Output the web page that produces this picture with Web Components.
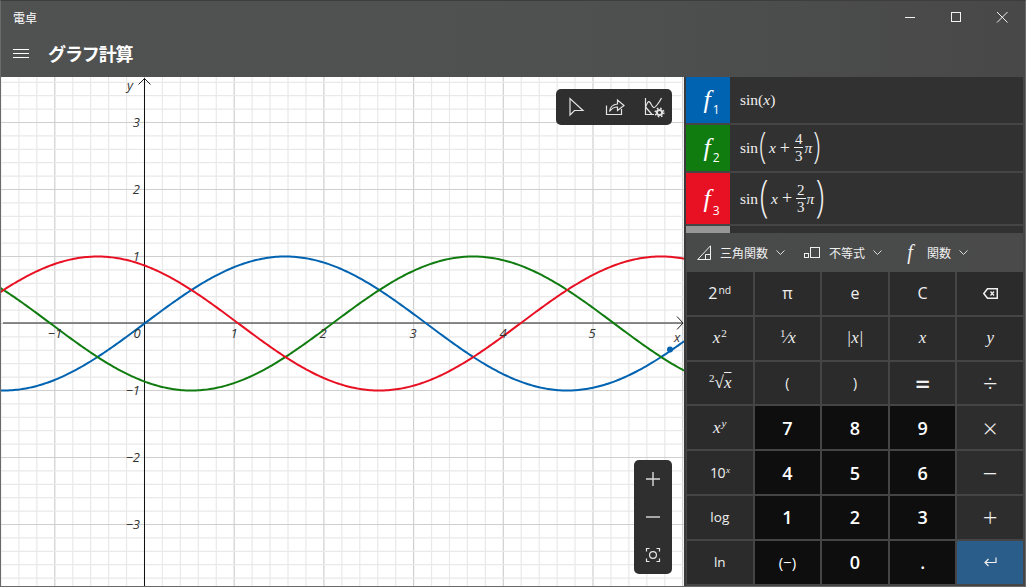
<!DOCTYPE html>
<html lang="ja">
<head>
<meta charset="utf-8">
<title>電卓</title>
<style>
  html, body { margin: 0; height: 100%; overflow: hidden; background: #4a4a4a; }
</style>
</head>
<body>
<calc-window>
  <title-bar slot="top" app="電卓" heading="グラフ計算"></title-bar>
  <graph-view slot="graph">
    <tool-pod class="top">
      <svg width="22" height="22" viewBox="0 0 22 22" fill="none" stroke="#e4e4e4" stroke-width="1.2"><path d="M5 2.5 L5 19 L9.5 14.5 L18 14.5 Z"/></svg>
      <svg width="22" height="22" viewBox="0 0 22 22" fill="none" stroke="#e4e4e4" stroke-width="1.2"><path d="M2.5 9.5 V18.5 H17.5 V13"/><path d="M5.5 15.5 C6 11 9 8.5 13.5 8 V4 L20 9.5 L13.5 14.5 V11 C10 11 7.5 12.5 5.5 15.5 Z"/></svg>
      <svg width="22" height="22" viewBox="0 0 22 22" fill="none" stroke="#e4e4e4" stroke-width="1.2"><path d="M2.5 2 V18.5 H11"/><path d="M2.5 11 C5 5 6 4 8 8 C10 12 11 13 14 9 C16 6.5 17.5 4 18.5 2"/><path d="M2.5 11 L9 18.5"/><circle cx="16.5" cy="16.5" r="2.6" stroke-width="2"/><circle cx="16.5" cy="16.5" r="4.3" stroke-width="1.5" stroke-dasharray="1.6 1.8"/></svg>
    </tool-pod>
    <tool-pod class="bottom" vertical>
      <svg width="18" height="18" viewBox="0 0 18 18" fill="none" stroke="#dcdcdc" stroke-width="1.4"><path d="M9 2 V16 M2 9 H16"/></svg>
      <svg width="18" height="18" viewBox="0 0 18 18" fill="none" stroke="#dcdcdc" stroke-width="1.4"><path d="M2 9 H16"/></svg>
      <svg width="18" height="18" viewBox="0 0 18 18" fill="none" stroke="#e8e8e8" stroke-width="1.2"><circle cx="9" cy="9" r="3.4"/><path d="M2.5 5.5 V2.5 H5.5 M12.5 2.5 H15.5 V5.5 M15.5 12.5 V15.5 H12.5 M5.5 15.5 H2.5 V12.5"/></svg>
    </tool-pod>
  </graph-view>
  <side-panel slot="side">
    <fn-row slot="rows" color="#0063b1" sub="1"><math-sin></math-sin></fn-row>
    <fn-row slot="rows" color="#107c10" sub="2"><math-sin num="4" den="3"></math-sin></fn-row>
    <fn-row slot="rows" color="#e81123" sub="3" tall><math-sin num="2" den="3" big></math-sin></fn-row>
    <fn-scroll slot="rows"></fn-scroll>
    <math-bar slot="bar"></math-bar>
    <key-pad slot="keys">
      <calc-key kind="big">2<sup>nd</sup></calc-key>
      <calc-key kind="big">π</calc-key>
      <calc-key kind="big">e</calc-key>
      <calc-key kind="big">C</calc-key>
      <calc-key><svg width="15" height="11" viewBox="0 0 15 11" fill="none" stroke="#f0f0f0" stroke-width="1.3"><path d="M4.5 .7 H14.3 V10.3 H4.5 L.8 5.5 Z" stroke-width="1.5"/><path d="M7.5 3.5 L11 7.5 M11 3.5 L7.5 7.5"/></svg></calc-key>

      <calc-key kind="math">x<sup class="up">2</sup></calc-key>
      <calc-key kind="math"><sup class="up">1</sup>⁄x</calc-key>
      <calc-key kind="math">|x|</calc-key>
      <calc-key kind="math">x</calc-key>
      <calc-key kind="math">y</calc-key>

      <calc-key kind="math"><sup class="up">2</sup>√<span class="ov">x</span></calc-key>
      <calc-key>(</calc-key>
      <calc-key>)</calc-key>
      <calc-key kind="eq">=</calc-key>
      <calc-key kind="op">÷</calc-key>

      <calc-key kind="math">x<sup>y</sup></calc-key>
      <calc-key kind="num">7</calc-key>
      <calc-key kind="num">8</calc-key>
      <calc-key kind="num">9</calc-key>
      <calc-key kind="op">×</calc-key>

      <calc-key kind="ten">10<sup class="it">x</sup></calc-key>
      <calc-key kind="num">4</calc-key>
      <calc-key kind="num">5</calc-key>
      <calc-key kind="num">6</calc-key>
      <calc-key kind="op">−</calc-key>

      <calc-key kind="word">log</calc-key>
      <calc-key kind="num">1</calc-key>
      <calc-key kind="num">2</calc-key>
      <calc-key kind="num">3</calc-key>
      <calc-key kind="op">+</calc-key>

      <calc-key kind="word">ln</calc-key>
      <calc-key kind="num" thin>(−)</calc-key>
      <calc-key kind="num">0</calc-key>
      <calc-key kind="num">.</calc-key>
      <calc-key kind="enter"><svg width="13" height="10" viewBox="0 0 13 10" fill="none" stroke="#f0f0f0" stroke-width="1.2"><path d="M12 .5 V5.5 H1.2 M4.5 2 L1 5.5 L4.5 9"/></svg></calc-key>
    </key-pad>
  </side-panel>
</calc-window>

<script>
const JP_FONT = '"Noto Sans CJK JP", sans-serif';
const MATH_FONT = '"Liberation Serif", "DejaVu Serif", serif';

// small helper, every element here is just a template + open shadow root
function define(name, html, cls) {
  const tpl = document.createElement('template');
  tpl.innerHTML = html;
  customElements.define(name, class extends (cls || HTMLElement) {
    connectedCallback() {
      if (this.shadowRoot) return;
      this.attachShadow({mode: 'open'}).appendChild(tpl.content.cloneNode(true));
      if (this.setup) this.setup();
    }
  });
}

define('calc-window', `
  <style>
    :host { display: grid; grid-template-rows: 77px 510px; grid-template-columns: 684px 342px; width: 1026px; height: 587px; overflow: hidden; position: relative; }
    .top { grid-column: 1 / 3; }
    .edge { position: absolute; inset: 0; border: 1px solid #6a6a6a; border-top-color: #3d3d3d; pointer-events: none; }
  </style>
  <div class="top"><slot name="top"></slot></div>
  <slot name="graph"></slot>
  <slot name="side"></slot>
  <div class="edge"></div>
`);

define('title-bar', `
  <style>
    :host { display: block; height: 77px; color: #fff; background: linear-gradient(90deg, #505252, #4f5050 55%, #484848); }
    .cap { display: flex; height: 35px; align-items: center; padding-left: 13px; font: 12px ${JP_FONT}; }
    .win { margin-left: auto; margin-right: 1px; display: flex; }
    .win svg { display: block; width: 46px; height: 35px; }
    .head { display: flex; align-items: center; height: 36px; padding-left: 13px; }
    .menu { width: 16px; height: 7px; border-top: 1px solid #fff; border-bottom: 1px solid #fff; position: relative; }
    .menu::after { content: ""; position: absolute; left: 0; right: 0; top: 3px; height: 1px; background: #fff; }
    h1 { margin: 0 0 0 19px; font: 700 18px ${JP_FONT}; letter-spacing: -1.1px; }
  </style>
  <div class="cap"><span id="app"></span>
    <div class="win">
      <svg viewBox="0 0 46 35" fill="none" stroke="#f2f2f2"><path d="M18 17.5 H28"/></svg>
      <svg viewBox="0 0 46 35" fill="none" stroke="#f2f2f2"><rect x="18.5" y="12.5" width="9" height="9"/></svg>
      <svg viewBox="0 0 46 35" fill="none" stroke="#f2f2f2"><path d="M18 12 L28.5 22.5 M28.5 12 L18 22.5"/></svg>
    </div>
  </div>
  <div class="head"><div class="menu"></div><h1 id="heading"></h1></div>
`, class extends HTMLElement {
  setup() {
    this.shadowRoot.getElementById('app').textContent = this.getAttribute('app');
    this.shadowRoot.getElementById('heading').textContent = this.getAttribute('heading');
  }
});

define('graph-view', `
  <style>
    :host { display: block; position: relative; background: #fff; overflow: hidden; }
    svg.plot { display: block; width: 684px; height: 510px; }
    text { font: italic 13px "Open Sans", sans-serif; fill: #333; }
    ::slotted(tool-pod.top) { position: absolute; left: 556px; top: 12px; }
    ::slotted(tool-pod.bottom) { position: absolute; left: 634px; top: 383px; }
  </style>
  <svg class="plot" viewBox="0 77 684 510" xmlns="http://www.w3.org/2000/svg"></svg>
  <slot></slot>
`, class extends HTMLElement {
  setup() {
    const X0 = 144.5, Y0 = 323.5, SX = 89.7, SY = 67;
    let out = '';
    // grid, five minor cells per unit
    for (let k = -9; k <= 30; k++) {
      const x = X0 + k * SX / 5, major = k % 5 === 0;
      out += `<path d="M${x} 77V587" stroke="${major ? '#cfcfcf' : '#e9e9e9'}" stroke-width="1.2"/>`;
    }
    for (let k = -20; k <= 20; k++) {
      const y = Y0 + k * SY / 5, major = k % 5 === 0;
      out += `<path d="M0 ${y}H684" stroke="${major ? '#cfcfcf' : '#e9e9e9'}" stroke-width="1.2"/>`;
    }
    // axes
    out += `<path d="M3 323H683" stroke="#666" stroke-width="1.6"/>`;
    out += `<path d="M677 316.5L683 323L677 329.5" fill="none" stroke="#222" stroke-width="1"/>`;
    out += `<path d="M144.5 78V587" stroke="#111" stroke-width="1"/>`;
    out += `<path d="M138.5 84.5L144.5 78.5L150.5 84.5" fill="none" stroke="#222" stroke-width="1"/>`;
    // curves
    const curve = (phase, color) => {
      let d = '';
      for (let px = 0; px <= 684; px += 2) {
        const v = Math.sin((px - X0) / SX + phase);
        d += (px ? 'L' : 'M') + px + ' ' + (Y0 - v * SY).toFixed(2);
      }
      return `<path d="${d}" fill="none" stroke="${color}" stroke-width="2"/>`;
    };
    out += curve(0, '#0063b1') + curve(4 * Math.PI / 3, '#107c10') + curve(2 * Math.PI / 3, '#e81123');
    out += `<circle cx="670" cy="349.5" r="3" fill="#0063b1"/>`;
    // labels
    const label = (x, y, t, anchor) => `<text x="${x}" y="${y}" text-anchor="${anchor || 'middle'}">${t}</text>`;
    [[-1, 55], [1, 234], [2, 323], [3, 413], [4, 503], [5, 592]].forEach(([n, x]) => {
      out += label(x, 338, n < 0 ? '−' + -n : n);
    });
    out += label(137, 338, '0');
    [[3, 127], [2, 194], [1, 261], [-1, 395], [-2, 462], [-3, 529]].forEach(([n, y]) => {
      out += label(140, y, n < 0 ? '−' + -n : n, 'end');
    });
    out += label(130, 90, 'y') + label(677, 342, 'x');
    this.shadowRoot.querySelector('svg').innerHTML = out;
  }
});

define('tool-pod', `
  <style>
    :host { display: flex; background: #2f2f2f; border-radius: 5px; }
    .box { display: flex; align-items: center; gap: 17px; width: 116px; height: 36px; padding-left: 9px; box-sizing: border-box; }
    :host([vertical]) .box { flex-direction: column; gap: 20px; width: 38px; height: 114px; padding: 10px 0 0; }
    ::slotted(svg) { display: block; }
  </style>
  <div class="box"><slot></slot></div>
`);

define('side-panel', `
  <style>
    :host { display: grid; grid-template-rows: 156px 39px 1fr; background: #454545; border-left: 2px solid #3a3a3a; box-sizing: border-box; min-height: 0; }
    .rows { display: block; min-height: 0; }
  </style>
  <div class="rows"><slot name="rows"></slot></div>
  <slot name="bar"></slot>
  <slot name="keys"></slot>
`);

define('fn-row', `
  <style>
    :host { display: flex; height: 46px; margin-bottom: 2px; background: #313131; color: #f2f2f2; margin-right: 3px; }
    :host([tall]) { height: 51px; }
    .tag { width: 44px; display: flex; align-items: center; justify-content: center; color: #fff; }
    .f { font: italic 26px ${MATH_FONT}; margin-left: 1px; }
    .n { font: 12px "Open Sans", sans-serif; align-self: flex-end; margin: 0 -6px 5px 2px; }
    .body { display: flex; align-items: center; padding-left: 10px; }
  </style>
  <div class="tag" id="tag"><span class="f">f</span><span class="n" id="n"></span></div>
  <div class="body"><slot></slot></div>
`, class extends HTMLElement {
  setup() {
    this.shadowRoot.getElementById('tag').style.background = this.getAttribute('color');
    this.shadowRoot.getElementById('n').textContent = this.getAttribute('sub');
  }
});

define('fn-scroll', `
  <style>
    :host { display: block; height: 7px; background: #313131; margin-right: 3px; }
    div { width: 44px; height: 7px; background: #979797; }
  </style>
  <div></div>
`);

define('math-sin', `
  <style>
    :host { display: inline-flex; align-items: center; font: 15.5px ${MATH_FONT}; color: #f0f0f0; white-space: nowrap; }
    i { font-style: italic; }
    .p { font-family: "Open Sans", sans-serif; font-weight: 300; line-height: 1; transform: scaleX(.72); }
    .frac { display: inline-flex; flex-direction: column; align-items: center; font-size: 15px; line-height: 15px; margin: 0 1px; }
    .frac b { font-weight: 400; border-bottom: 1px solid #f0f0f0; padding: 0 1px; }
    .frac span { line-height: 16px; }
    .plus { margin: 0 3px 0 4px; font-size: 18px; }
  </style>
  <span id="out"></span>
`, class extends HTMLElement {
  setup() {
    const num = this.getAttribute('num'), den = this.getAttribute('den');
    const out = this.shadowRoot.getElementById('out');
    if (!num) {
      out.innerHTML = 'sin(<i>x</i>)';
      return;
    }
    out.style.display = 'inline-flex';
    out.style.alignItems = 'center';
    const size = this.hasAttribute('big') ? 44 : 36;
    out.innerHTML = `<span>sin</span><span class="p" style="font-size:${size}px;margin:-7px 1px 0 0">(</span>`
      + `<i>x</i><span class="plus">+</span>`
      + `<span class="frac"><b>${num}</b><span>${den}</span></span><i>π</i>`
      + `<span class="p" style="font-size:${size}px;margin:-7px 0 0 0">)</span>`;
  }
});

define('math-bar', `
  <style>
    :host { display: flex; align-items: center; height: 39px; color: #f0f0f0; font: 12px ${JP_FONT}; padding-left: 11px; box-sizing: border-box; background: linear-gradient(90deg, #484a4a, #4a4a4a); margin-right: 3px; }
    .item { display: flex; align-items: center; }
    .item + .item { margin-left: 19px; }
    .item:last-child { margin-left: 22px; }
    .label { margin-left: 9px; }
    .chev { margin-left: 8px; }
    .f { font: italic 20px ${MATH_FONT}; width: 12px; text-align: center; margin-right: 2px; }
    svg { display: block; }
  </style>
  <div class="item">
    <svg width="14" height="15" viewBox="0 0 14 15" fill="none" stroke="#f0f0f0"><path d="M.7 14.5 L13.5 .8 V14.5 Z M8.5 14.5 V9.5 H13.5"/></svg>
    <span class="label">三角関数</span>
    <svg class="chev" width="9" height="5" viewBox="0 0 9 5" fill="none" stroke="#ddd"><path d="M.5 .5 L4.5 4.5 L8.5 .5"/></svg>
  </div>
  <div class="item">
    <svg width="16" height="11" viewBox="0 0 16 11" fill="none" stroke="#f0f0f0"><rect x=".5" y="6.5" width="4" height="4"/><rect x="6.5" y=".5" width="9" height="10"/></svg>
    <span class="label">不等式</span>
    <svg class="chev" width="9" height="5" viewBox="0 0 9 5" fill="none" stroke="#ddd"><path d="M.5 .5 L4.5 4.5 L8.5 .5"/></svg>
  </div>
  <div class="item">
    <span class="f">f</span>
    <span class="label">関数</span>
    <svg class="chev" width="9" height="5" viewBox="0 0 9 5" fill="none" stroke="#ddd"><path d="M.5 .5 L4.5 4.5 L8.5 .5"/></svg>
  </div>
`);

define('key-pad', `
  <style>
    :host { display: grid; grid-template-columns: repeat(5, 1fr); grid-auto-rows: 42.8px; gap: 2px; padding: 0 3px 0 1px; box-sizing: border-box; background: #454545; }
  </style>
  <slot></slot>
`);

define('calc-key', `
  <style>
    :host { display: flex; align-items: center; justify-content: center; background: #2b2b2b; color: #f0f0f0; font: 14px "Open Sans", sans-serif; }
    :host([kind="big"]) { font-size: 16px; }
    :host([kind="ten"]) { letter-spacing: -.5px; }
    :host([kind="word"]) { font-size: 13.5px; }
    :host([kind="num"]) { background: #0e0e0e; color: #fff; font-weight: 600; font-size: 18px; }
    :host([kind="num"][thin]) { font-weight: 400; font-size: 15px; }
    :host([kind="math"]) { font: italic 17px ${MATH_FONT}; }
    :host([kind="op"]) { font: 300 26px "Open Sans", sans-serif; background: #2d2d2d; }
    :host([kind="eq"]) { font: 600 26px "Open Sans", sans-serif; background: #2b2b2b; }
    :host([kind="enter"]) { background: #2a5d8a; }
    /* wrapper keeps text and sup inline, a flex host would blockify the sup */
    .in { display: block; white-space: nowrap; }
    ::slotted(sup) { font-size: .65em; line-height: 0; vertical-align: .55em; margin-left: 1px; }
    ::slotted(sup.up) { font-style: normal; }
    ::slotted(sup.it) { font-style: italic; font-family: ${MATH_FONT}; }
    ::slotted(.ov) { text-decoration: overline; }
    ::slotted(svg) { display: block; }
  </style>
  <span class="in"><slot></slot></span>
`);
</script>
</body>
</html>
